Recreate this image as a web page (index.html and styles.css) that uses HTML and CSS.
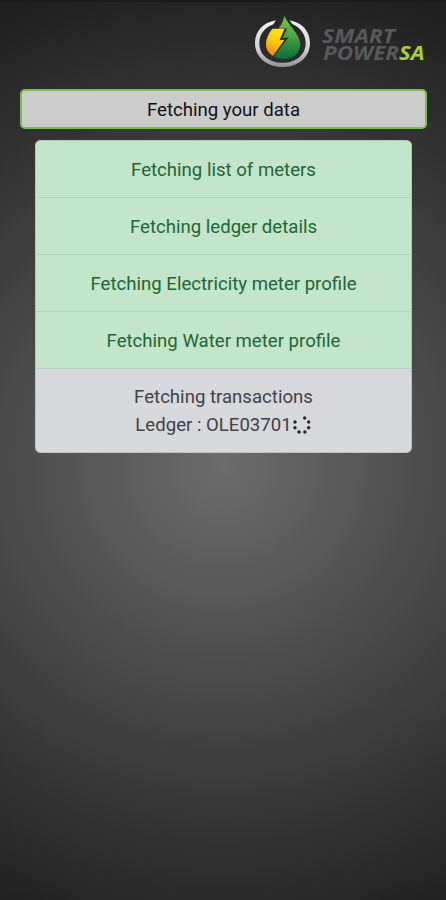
FILE: index.html
```
<!DOCTYPE html>
<html lang="en">
<head>
    <meta charset="UTF-8">
    <meta name="viewport" content="width=device-width, initial-scale=1.0">
    <title>Smart Power SA</title>
    <link rel="stylesheet" href="styles.css">
</head>
<body>
    <header class="header">
        <svg class="logo" width="176" height="60" viewBox="0 0 176 60" role="img" aria-label="Smart Power SA">
            <defs>
                <linearGradient id="ring" x1="0" y1="0" x2="0" y2="1">
                    <stop offset="0" stop-color="#f2f2f4"/>
                    <stop offset="0.6" stop-color="#d2d2d6"/>
                    <stop offset="1" stop-color="#929296"/>
                </linearGradient>
                <linearGradient id="leaf" x1="0" y1="0" x2="0" y2="1">
                    <stop offset="0" stop-color="#7cc043"/>
                    <stop offset="0.45" stop-color="#4da544"/>
                    <stop offset="1" stop-color="#096b38"/>
                </linearGradient>
                <linearGradient id="flame" x1="0.6" y1="0" x2="0.3" y2="1">
                    <stop offset="0" stop-color="#fbe80e"/>
                    <stop offset="0.5" stop-color="#f9c70e"/>
                    <stop offset="1" stop-color="#f07d1c"/>
                </linearGradient>
            </defs>
            <path d="M26 10.300 C13 12.500 5 21.500 5 33 C5 47 16.500 57 32.500 57 C48.500 57 60 47 60 33 C60 21.500 52 12.500 39.500 10.300 L42.300 14 C50.500 17.500 55.700 24.500 55.700 33 C55.700 44.500 46.500 52.800 32.500 52.800 C18.500 52.800 9.300 44.500 9.300 33 C9.300 24.500 14.500 17.500 23 14.500 Z" fill="url(#ring)"/>
            <path d="M34.500 6 C37 14 50.300 24 50.300 34.500 C50.300 43 43.500 49 34 49 C29.500 49 26.500 48 24 46.300 L38.500 27.500 L32.500 28 L37 18.500 L28.500 18.500 C32 14 33.500 10 34.500 6 Z" fill="url(#leaf)"/>
            <path d="M22.500 18.700 L34.500 18.700 L29.500 30.200 L34.500 29.800 L23 46 C18 43 15.800 38.500 16 33.500 C16.200 28.500 19 22.500 22.500 18.700 Z" fill="url(#flame)"/>
            <g class="logo-text">
                <text x="72" y="32.600" textLength="73" lengthAdjust="spacingAndGlyphs">SMART</text>
                <text x="73" y="49.600" textLength="76" lengthAdjust="spacingAndGlyphs">POWER</text>
                <text class="logo-accent" x="149" y="49.600" textLength="25.500" lengthAdjust="spacingAndGlyphs">SA</text>
            </g>
        </svg>
    </header>
    <main class="container">
        <div class="title">Fetching your data</div>
        <ul class="steps">
            <li class="step done">Fetching list of meters</li>
            <li class="step done">Fetching ledger details</li>
            <li class="step done">Fetching Electricity meter profile</li>
            <li class="step done">Fetching Water meter profile</li>
            <li class="step loading">
                <div>Fetching transactions</div>
                <div class="ledger">
                    <span>Ledger : OLE03701</span>
                    <svg class="spinner" width="20" height="20" viewBox="0 0 20 20" aria-hidden="true">
                        <circle cx="12.700" cy="3" r="1.700"/>
                        <circle cx="16.700" cy="7" r="1.700"/>
                        <circle cx="16.700" cy="12.700" r="1.700"/>
                        <circle cx="12.900" cy="17" r="1.700"/>
                        <circle cx="7" cy="17" r="1.700"/>
                        <circle cx="3" cy="12.700" r="1.700"/>
                        <circle cx="3" cy="7" r="1.700"/>
                    </svg>
                </div>
            </li>
        </ul>
    </main>
</body>
</html>
```
FILE: styles.css
```
* {
    box-sizing: border-box;
}
body {
    font-family: Roboto, Arial, sans-serif;
    font-size: 18.6px;
    line-height: 28px;
    margin: 0;
    min-height: 900px;
    border-top: 2px solid #1b1b1b;
    background: radial-gradient(circle 500px at 50% 465px, #6c6c6c 0%, #494949 45%, #303030 78%, #202020 100%) no-repeat;
}
.header {
    display: flex;
    justify-content: flex-end;
    height: 87px;
    padding: 8px 20px 0 0;
}
.logo-text {
    font-family: "Open Sans", Arial, sans-serif;
    font-size: 19px;
    font-weight: 700;
    font-style: italic;
    fill: #58595c;
}
.logo-accent {
    fill: #a4d233;
}
.container {
    padding: 0 19px 0 20px;
}
.title {
    height: 40px;
    padding-top: 5px;
    border: 2px solid #79bd4a;
    border-radius: 5px;
    background-color: #cdcccd;
    color: #111;
    text-align: center;
}
.steps {
    list-style: none;
    margin: 11px 15px 0;
    padding: 0;
    border: 1px solid #b4c5b9;
    border-radius: 5px;
    overflow: hidden;
}
.step {
    padding: 15px 10px 13px;
    border-bottom: 1px solid #b3d3bb;
    text-align: center;
}
.done {
    background-color: #c3e6cb;
    color: #226436;
}
.loading {
    padding: 14px 10px;
    border-bottom: none;
    background-color: #d8d9dd;
    color: #404246;
}
.ledger {
    display: flex;
    justify-content: center;
    height: 27px;
}
.spinner {
    margin-top: 4px;
    fill: #25272b;
}
```
